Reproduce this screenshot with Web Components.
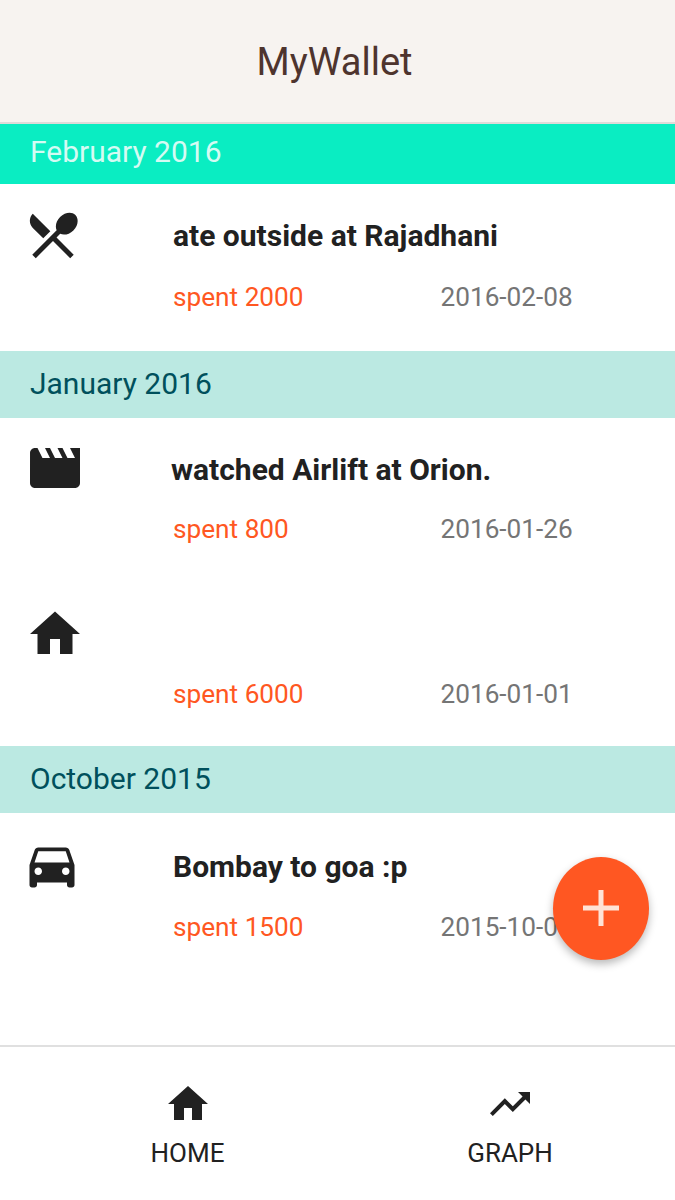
<!DOCTYPE html>
<html>
<head>
<meta charset="utf-8">
<title>MyWallet</title>
<style>
  html, body { margin: 0; padding: 0; background: #fff; }
  body { font-family: Roboto, "Liberation Sans", sans-serif; }
</style>
</head>
<body>
<wallet-app>
  <wallet-toolbar slot="top">MyWallet</wallet-toolbar>

  <month-header active>February 2016</month-header>
  <expense-row icon="dining" amount="spent 2000" date="2016-02-08" style="--row-h:167px;--icon-x:23px;--icon-y:20.5px;--title-y:34px;--spent-y:33px">ate outside at Rajadhani</expense-row>

  <month-header>January 2016</month-header>
  <expense-row icon="movie" amount="spent 800" date="2016-01-26" style="--row-h:164px;--icon-x:25px;--icon-y:20px;--title-y:34px;--title-x:-2px;--spent-y:31px">watched Airlift at Orion.</expense-row>
  <expense-row icon="home" amount="spent 6000" date="2016-01-01" style="--row-h:164px;--icon-x:25px;--icon-y:21.5px;--title-y:33px;--spent-y:33px"></expense-row>

  <month-header>October 2015</month-header>
  <expense-row icon="car" amount="spent 1500" date="2015-10-0" style="--row-h:232px;--icon-x:22px;--icon-y:21.5px;--title-y:36px;--spent-y:32px">Bombay to goa :p</expense-row>

  <tab-bar slot="bottom"></tab-bar>
  <add-button slot="fab"></add-button>
</wallet-app>

<script>
const ICONS = {
  dining: "M8.1 13.34l2.83-2.83L3.91 3.5c-1.56 1.56-1.56 4.09 0 5.66l4.19 4.18zm6.78-1.81c1.53.71 3.68.21 5.27-1.38 1.91-1.91 2.28-4.65.81-6.12-1.46-1.46-4.2-1.1-6.12.81-1.59 1.59-2.09 3.74-1.38 5.27L3.7 19.87l1.41 1.41L12 14.41l6.88 6.88 1.41-1.41L13.41 13l1.47-1.47z",
  movie: "M18 4l2 4h-3l-2-4h-2l2 4h-3l-2-4H8l2 4H7L5 4H4c-1.1 0-1.99.9-1.99 2L2 18c0 1.1.9 2 2 2h16c1.1 0 2-.9 2-2V4h-4z",
  home: "M10 20v-6h4v6h5v-8h3L12 3 2 12h3v8z",
  car: "M18.92 6.01C18.72 5.42 18.16 5 17.5 5h-11c-.66 0-1.21.42-1.42 1.01L3 12v8c0 .55.45 1 1 1h1c.55 0 1-.45 1-1v-1h12v1c0 .55.45 1 1 1h1c.55 0 1-.45 1-1v-8l-2.08-5.99zM6.5 16c-.83 0-1.5-.67-1.5-1.5S5.67 13 6.5 13s1.5.67 1.5 1.5S7.33 16 6.5 16zm11 0c-.83 0-1.5-.67-1.5-1.5s.67-1.5 1.5-1.5 1.5.67 1.5 1.5-.67 1.5-1.5 1.5zM5 11l1.5-4.5h11L19 11H5z",
  trending: "M16 6l2.29 2.29-4.88 4.88-4-4L2 16.59 3.41 18l6-6 4 4 6.3-6.29L22 12V6z"
};

function iconSvg(name, size) {
  return `<svg width="${size}" height="${size}" viewBox="0 0 24 24" fill="#212121"><path d="${ICONS[name]}"/></svg>`;
}

class WalletApp extends HTMLElement {
  constructor() {
    super();
    this.attachShadow({ mode: "open" });
    this.shadowRoot.innerHTML = `
      <style>
        :host { display: flex; flex-direction: column; position: relative; width: 675px; height: 1200px; overflow: hidden; background: #fff; }
        main { flex: 1; min-height: 0; }
        ::slotted([slot=fab]) { position: absolute; left: 553px; top: 857px; }
      </style>
      <slot name="top"></slot>
      <main><slot></slot></main>
      <slot name="bottom"></slot>
      <slot name="fab"></slot>`;
  }
}

class WalletToolbar extends HTMLElement {
  constructor() {
    super();
    this.attachShadow({ mode: "open" });
    this.shadowRoot.innerHTML = `
      <style>
        :host { display: flex; align-items: center; justify-content: center; box-sizing: border-box; height: 124px; padding: 2px 6px 0 0; background: #f7f3f0; border-bottom: 2px solid #dedbd9; color: #4e342e; font-size: 38px; }
      </style>
      <slot></slot>`;
  }
}

class MonthHeader extends HTMLElement {
  constructor() {
    super();
    this.attachShadow({ mode: "open" });
    this.shadowRoot.innerHTML = `
      <style>
        :host { display: flex; align-items: center; box-sizing: border-box; height: 67px; padding: 0 0 2px 30px; background: #bbe9e2; color: #00505c; font-size: 30px; }
        :host([active]) { height: 60px; padding-bottom: 6px; background: #0aedc2; color: #d4fbf3; }
      </style>
      <slot></slot>`;
  }
}

class ExpenseRow extends HTMLElement {
  constructor() {
    super();
    this.attachShadow({ mode: "open" });
    const icon = this.getAttribute("icon");
    this.shadowRoot.innerHTML = `
      <style>
        :host { display: block; position: relative; box-sizing: border-box; height: var(--row-h); color: #212121; }
        .icon { position: absolute; left: var(--icon-x); top: var(--icon-y); display: block; }
        .body { display: flex; flex-direction: column; padding-left: 173px; }
        .title { height: 36px; margin-top: var(--title-y); margin-left: var(--title-x, 0); line-height: 36px; font-size: 30px; font-weight: 700; }
        .meta { display: flex; margin-top: calc(var(--spent-y) - 5px); font-size: 26.2px; line-height: 30px; }
        .amount { width: 267.5px; color: #ff5722; }
        .date { color: #757575; }
      </style>
      <div class="icon">${iconSvg(icon, 60)}</div>
      <div class="body">
        <div class="title"><slot></slot></div>
        <div class="meta">
          <span class="amount">${this.getAttribute("amount")}</span>
          <span class="date">${this.getAttribute("date")}</span>
        </div>
      </div>`;
  }
}

class TabBar extends HTMLElement {
  constructor() {
    super();
    this.attachShadow({ mode: "open" });
    this.shadowRoot.innerHTML = `
      <style>
        :host { display: grid; grid-template-columns: 375px 270px; box-sizing: border-box; height: 155px; border-top: 2px solid #e0e0e0; background: #fff; color: #212121; }
        .tab { display: flex; flex-direction: column; align-items: center; padding-top: 33px; font-size: 26px; line-height: 30px; }
        svg { display: block; margin-bottom: 10px; }
      </style>
      <div class="tab">${iconSvg("home", 48)}<span>HOME</span></div>
      <div class="tab">${iconSvg("trending", 48)}<span>GRAPH</span></div>`;
  }
}

class AddButton extends HTMLElement {
  constructor() {
    super();
    this.attachShadow({ mode: "open" });
    this.shadowRoot.innerHTML = `
      <style>
        :host { display: flex; align-items: center; justify-content: center; width: 96px; height: 103px; border-radius: 50%; background: #ff5722; box-shadow: 0 4px 8px rgba(0,0,0,.28); }
        svg { display: block; margin-top: -1px; }
      </style>
      <svg width="36" height="36" viewBox="0 0 36 36" fill="#ffe3d6"><path d="M15.5 0h5v15.5H36v5H20.500V36h-5V20.500H0v-5h15.500z"/></svg>`;
  }
}

customElements.define("wallet-app", WalletApp);
customElements.define("wallet-toolbar", WalletToolbar);
customElements.define("month-header", MonthHeader);
customElements.define("expense-row", ExpenseRow);
customElements.define("tab-bar", TabBar);
customElements.define("add-button", AddButton);
</script>
</body>
</html>
